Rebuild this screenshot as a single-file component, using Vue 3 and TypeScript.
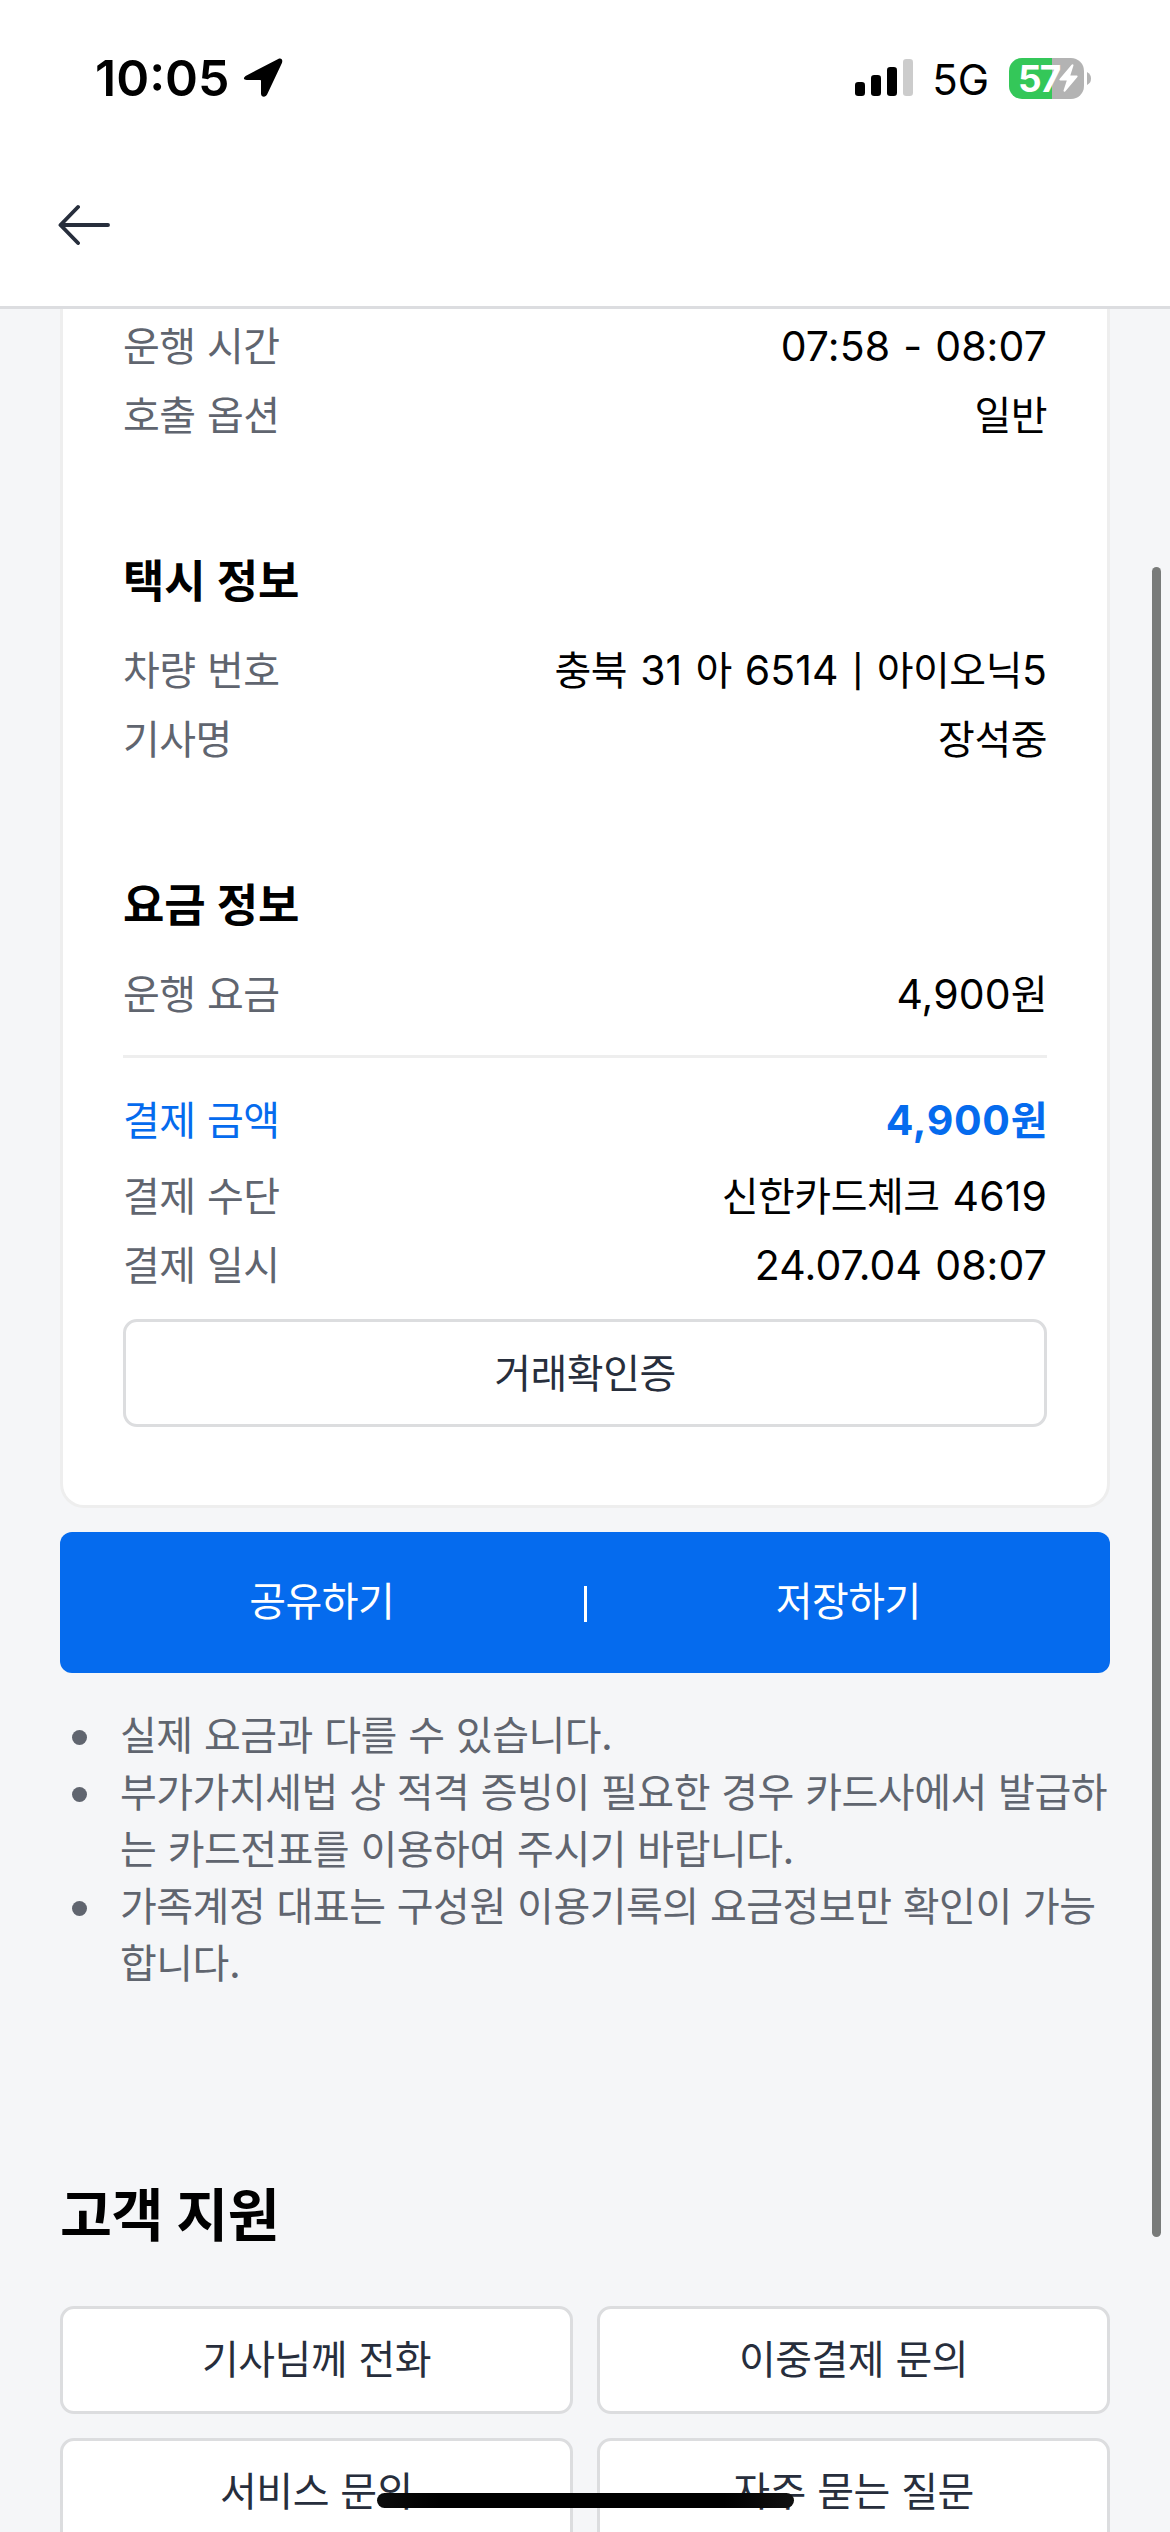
<script setup lang="ts">
import { h, type FunctionalComponent } from 'vue'

interface Row {
  label: string
  value: string
  accent?: boolean
}

const tripRows: Row[] = [
  { label: '운행 시간', value: '07:58 - 08:07' },
  { label: '호출 옵션', value: '일반' },
]
const taxiRows: Row[] = [
  { label: '차량 번호', value: '충북 31 아 6514 | 아이오닉5' },
  { label: '기사명', value: '장석중' },
]
const fareRows: Row[] = [{ label: '운행 요금', value: '4,900원' }]
const paymentRows: Row[] = [
  { label: '결제 금액', value: '4,900원', accent: true },
  { label: '결제 수단', value: '신한카드체크 4619' },
  { label: '결제 일시', value: '24.07.04 08:07' },
]
const notices: string[][] = [
  ['실제 요금과 다를 수 있습니다.'],
  ['부가가치세법 상 적격 증빙이 필요한 경우 카드사에서 발급하', '는 카드전표를 이용하여 주시기 바랍니다.'],
  ['가족계정 대표는 구성원 이용기록의 요금정보만 확인이 가능', '합니다.'],
]
const supportItems: string[] = ['기사님께 전화', '이중결제 문의', '서비스 문의', '자주 묻는 질문']

const runClass = (run: string): string => {
  if (run === '|') return 'pipe'
  return /[가-힣]/.test(run) ? 'ko' : 'latin'
}

const MixedText: FunctionalComponent<{ text: string }> = ({ text }) =>
  (text.match(/[가-힣]+(?: +[가-힣]+)*|\||[^가-힣|]+/g) ?? []).map((run) =>
    h('span', { class: runClass(run) }, run),
  )
MixedText.props = ['text']
</script>

<template>
  <div class="screen">
    <header class="top">
      <div class="status">
        <div class="clock">
          <span class="time">10:05</span>
          <svg class="location" width="40" height="40" viewBox="0 0 40 40">
            <path
              d="M35.2 1 4 17.2C-.6 19.5.4 22 3.8 22H17.2q.8 0 .8.8V35.5c0 3.8 4.6 4.4 6.2.8L38.7 5.600C40.300 2 38.500-.5 35.200 1Z"
              fill="#000"
            />
          </svg>
        </div>
        <div class="indicators">
          <svg width="58" height="38" viewBox="0 0 58 38">
            <rect x="0" y="23" width="10" height="14" rx="3.200" />
            <rect x="16" y="16" width="10" height="21" rx="3.200" />
            <rect x="32" y="8" width="10" height="29" rx="3.200" />
            <rect x="48" y="0" width="10" height="37" rx="3.200" fill="#ccc" />
          </svg>
          <span class="network">5G</span>
          <div class="battery">
            <div class="cell">
              <span class="percent">57</span>
              <svg class="bolt" width="19" height="28" viewBox="0 0 19 28">
                <path
                  d="M12.600.8.8 14.800C0 15.800.3 16.600 1.500 16.600H7.800L4.600 26.300C4.200 27.700 5.500 28.200 6.400 27.200L18.200 13.200C19 12.200 18.600 11.400 17.500 11.400H11.300L14.400 1.700C14.900.3 13.500-.2 12.600.8Z"
                  fill="#fff"
                />
              </svg>
            </div>
            <svg width="4" height="13" viewBox="0 0 4 13"><path d="M0 0Q4 2 4 6.500T0 13Z" fill="#b3b3b3" /></svg>
          </div>
        </div>
      </div>
      <nav class="nav">
        <svg width="52" height="42" viewBox="0 0 52 42">
          <path
            d="M50 21H2.500M20 3 2.500 21 20 39"
            fill="none"
            stroke="#272e3c"
            stroke-width="3.900"
            stroke-linecap="round"
            stroke-linejoin="round"
          />
        </svg>
      </nav>
    </header>

    <main class="content">
      <article class="card">
        <section class="group">
          <div v-for="row in tripRows" :key="row.label" class="row">
            <span class="label"><MixedText :text="row.label" /></span>
            <span class="value"><MixedText :text="row.value" /></span>
          </div>
        </section>
        <section class="group">
          <h2 class="title"><MixedText text="택시 정보" /></h2>
          <div v-for="row in taxiRows" :key="row.label" class="row">
            <span class="label"><MixedText :text="row.label" /></span>
            <span class="value"><MixedText :text="row.value" /></span>
          </div>
        </section>
        <section class="group">
          <h2 class="title"><MixedText text="요금 정보" /></h2>
          <div v-for="row in fareRows" :key="row.label" class="row">
            <span class="label"><MixedText :text="row.label" /></span>
            <span class="value"><MixedText :text="row.value" /></span>
          </div>
          <hr class="divider" />
          <div v-for="row in paymentRows" :key="row.label" class="row" :class="{ accent: row.accent }">
            <span class="label"><MixedText :text="row.label" /></span>
            <span class="value"><MixedText :text="row.value" /></span>
          </div>
          <button class="outline receipt"><MixedText text="거래확인증" /></button>
        </section>
      </article>

      <div class="actions">
        <button class="action"><MixedText text="공유하기" /></button>
        <i class="bar"></i>
        <button class="action"><MixedText text="저장하기" /></button>
      </div>

      <ul class="notices">
        <li v-for="(lines, i) in notices" :key="i">
          <span v-for="line in lines" :key="line" class="line"><MixedText :text="line" /></span>
        </li>
      </ul>

      <h1 class="support-title"><MixedText text="고객 지원" /></h1>
      <div class="support">
        <button v-for="item in supportItems" :key="item" class="outline"><MixedText :text="item" /></button>
      </div>
    </main>

    <div class="scrollbar"></div>
    <div class="home"></div>
  </div>
</template>

<style>
body {
  margin: 0;
  overflow: hidden;
}

.ko {
  font-family: 'Noto Sans CJK KR', sans-serif;
  font-size: 40px;
  letter-spacing: -0.5px;
  word-spacing: 2.9px;
  line-height: 0;
}

.latin {
  letter-spacing: 0.1px;
  word-spacing: 1.4px;
  line-height: 0;
  white-space: pre;
}

.pipe {
  margin: 0 0.5px;
  font-size: 32px;
  font-weight: 500;
  line-height: 0;
  vertical-align: 2px;
}

.title .ko {
  font-size: 45px;
  letter-spacing: -0.1px;
  word-spacing: 1px;
}

.support-title .ko {
  font-size: 56.5px;
  letter-spacing: -0.5px;
  word-spacing: 1px;
}
</style>

<style scoped>
.screen {
  position: relative;
  display: flex;
  flex-direction: column;
  width: 1170px;
  height: 2532px;
  overflow: hidden;
  background: #f5f6f8;
  color: #000;
  font-family: Inter, 'Noto Sans CJK KR', sans-serif;
  font-size: 41px;
}

.top {
  box-sizing: border-box;
  flex: none;
  height: 309px;
  background: #fff;
  border-bottom: 3px solid #dcdde0;
}

.status {
  display: flex;
  justify-content: space-between;
  height: 141px;
  padding: 0 79px 0 95px;
}

.clock,
.indicators {
  display: flex;
  align-items: center;
  height: 156px;
}

.time {
  font-size: 50px;
  font-weight: 600;
  line-height: 60px;
}

.location {
  margin-left: 13px;
}

.network {
  margin: 3px 20px 0 19px;
  font-size: 42px;
}

.battery {
  display: flex;
  align-items: center;
  gap: 3px;
}

.cell {
  display: flex;
  align-items: center;
  box-sizing: border-box;
  width: 75px;
  height: 41px;
  padding-left: 9px;
  border-radius: 13px;
  background: linear-gradient(90deg, #34c759 43px, #b3b3b3 43px);
}

.percent {
  width: 41px;
  color: #fff;
  font-size: 37px;
  font-weight: 700;
  letter-spacing: -2px;
  line-height: 41px;
}

.nav {
  padding: 63px 0 0 58px;
}

.nav svg {
  display: block;
}

.content {
  padding: 0 60px;
}

.card {
  box-sizing: border-box;
  height: 1199px;
  padding: 3px 60px 0;
  border: 3px solid #eee;
  border-top: 0;
  border-radius: 0 0 24px 24px;
  background: #fff;
}

.group + .group {
  margin-top: 102px;
}

.title {
  margin: 0 0 24px;
  font-size: 45px;
  font-weight: 700;
  line-height: 60px;
}

.row {
  display: flex;
  justify-content: space-between;
  height: 69px;
  line-height: 69px;
  white-space: nowrap;
}

.label {
  color: #60656f;
}

.row.accent {
  height: 76px;
  color: #056bee;
}

.accent .label {
  color: inherit;
}

.accent .value {
  font-weight: 700;
}

.accent .value :deep(.latin) {
  letter-spacing: 0.7px;
}

.divider {
  height: 3px;
  margin: 26px 0 28px;
  border: 0;
  background: #eee;
}

button {
  margin: 0;
  padding: 0;
  font: inherit;
}

.outline {
  box-sizing: border-box;
  height: 108px;
  border: 3px solid #dcdddf;
  border-radius: 14px;
  background: #fff;
  color: #272e3c;
  line-height: 90px;
}

.receipt {
  width: 100%;
  margin-top: 19px;
}

.actions {
  display: flex;
  align-items: center;
  height: 141px;
  margin-top: 24px;
  border-radius: 12px;
  background: #056bee;
}

.action {
  box-sizing: border-box;
  flex: 1;
  height: 141px;
  padding-bottom: 4px;
  border: 0;
  background: none;
  color: #fff;
  line-height: 120px;
}

.bar {
  width: 3px;
  height: 36px;
  margin-top: 3px;
  background: #fff;
}

.notices {
  margin: 34px 0 0;
  padding: 0;
  color: #60656f;
  line-height: 57px;
  list-style: none;
}

.notices li {
  position: relative;
  padding-left: 60px;
}

.notices li::before {
  content: '';
  position: absolute;
  top: 23px;
  left: 12px;
  width: 15px;
  height: 15px;
  border-radius: 50%;
  background: #60656f;
}

.line {
  display: block;
  white-space: nowrap;
}

.support-title {
  margin: 184px 0 50px;
  font-size: 57px;
  font-weight: 700;
  line-height: 80px;
}

.support {
  display: grid;
  grid-template-columns: 1fr 1fr;
  gap: 24px;
}

.support .outline {
  padding-bottom: 3px;
}

.scrollbar {
  position: absolute;
  top: 567px;
  right: 9px;
  width: 9px;
  height: 1670px;
  border-radius: 5px;
  background: #797b7a;
}

.home {
  position: absolute;
  top: 2493px;
  left: 377px;
  width: 417px;
  height: 15px;
  border-radius: 8px;
  background: linear-gradient(90deg, #0c0c0c, #000 15%, #000 83%, #111);
}
</style>
